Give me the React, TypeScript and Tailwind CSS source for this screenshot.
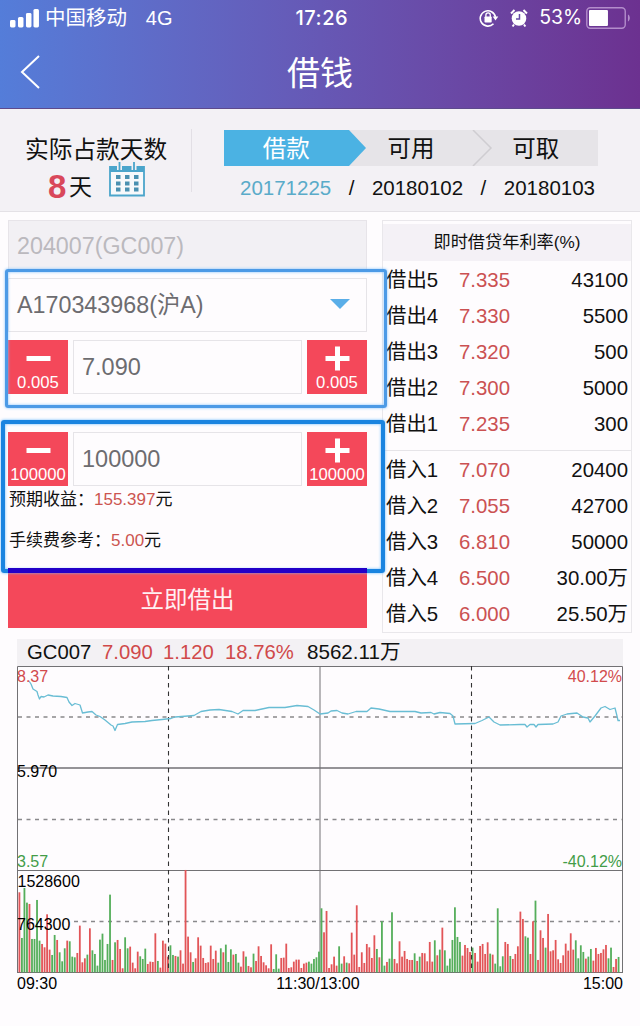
import type { ReactNode } from "react";

type Quote = { label: string; rate: string; amount: string };

const lendQuotes: Quote[] = [
    { label: "借出5", rate: "7.335", amount: "43100" },
    { label: "借出4", rate: "7.330", amount: "5500" },
    { label: "借出3", rate: "7.320", amount: "500" },
    { label: "借出2", rate: "7.300", amount: "5000" },
    { label: "借出1", rate: "7.235", amount: "300" },
];

const borrowQuotes: Quote[] = [
    { label: "借入1", rate: "7.070", amount: "20400" },
    { label: "借入2", rate: "7.055", amount: "42700" },
    { label: "借入3", rate: "6.810", amount: "50000" },
    { label: "借入4", rate: "6.500", amount: "30.00万" },
    { label: "借入5", rate: "6.000", amount: "25.50万" },
];

// One entry per minute: r = up, g = down, followed by the bar height in thirds of a pixel
const volumes = (
    "r240 g103 g253 g209 r205 g100 g100 g217 g95 r85 r75 r174 r68 g52 g112 r97 g60 g33 g72 r95 g93 g47 g45 r58 r140 r30 r42 g53 r132 g66 " +
    "g55 g20 g98 g116 g37 g85 g233 r37 g90 r97 r70 r12 g105 g72 r77 r29 r12 r62 g48 g40 g71 r25 r32 r31 r117 g34 r14 r95 r86 r47 " +
    "g81 g52 r49 g47 r66 r26 r307 r107 r60 g31 r42 r105 r80 r43 r28 r30 r80 r40 r65 g29 g72 r60 g83 g31 g69 r53 g55 g29 r17 r63 " +
    "g47 r19 r15 g56 r34 r78 r49 r30 r21 r12 r84 g10 g54 g11 r43 r44 r86 r13 r15 r32 r38 r38 r13 r26 r29 g32 g26 g40 g45 g62 " +
    "g192 r120 r184 r13 r24 r47 r20 g78 g26 r48 g29 r27 r119 r53 r201 r16 r60 r28 r85 r75 r43 r111 g70 r45 g153 g20 r31 g41 g180 r40 " +
    "r27 r93 r47 r64 r40 r37 r37 g57 r34 g47 r58 r57 r33 r91 r32 g96 r51 g68 r134 g66 g20 g41 g97 g195 g106 g91 r50 r82 r73 r61 " +
    "g74 r58 r32 r79 r85 r55 r90 g56 r53 g26 g192 g18 g48 r91 r85 g49 r40 r55 r78 r182 r160 g108 g104 r55 r153 g215 r37 r126 r103 g74 " +
    "r175 r63 r66 r97 r39 r28 r51 r86 r65 r117 r68 g96 g42 g81 g61 r41 g47 g70 r35 r73 r55 r58 r69 r82 g42 g74 r16 r40 g46"
).split(" ");

const pricePoints =
    "29,681 31,684 33,689 37,691.5 38,695 39.5,699 41,696.5 44,697 48,695 53,696 61,696.5 67,697.5 69,702 72,705.5 75,703.5 80,705 82.5,713 88,712 92,711.5 96,715 100,716.5 105,720 111,725 113,726 115,730.5 117.5,724.5 125,723.5 132,722 145,721.5 152,720.5 162,719.5 171,718.5 175,717 188,716 194,715.5 201,711.5 210,710 219,709.5 232,711.5 238,714 243,710.5 255,710.5 262,709 269,707.5 285,707.5 297,705.5 308,706.5 314,710 320,714 328,713 331,711 337,710.5 342,713 348,714 356,711.5 367,711.5 371,708 379,709 390,711.5 415,711.5 421,713 431,712.5 434,714 440,712.5 450,713.5 453,716 455,724 475,723.5 482,720.5 489,717 494,722 500,725 520,724.5 525,724.5 527,727 530,724.5 534,724.5 536,727 538,724.5 553,724 558,722 561,716 567,714 577,713 583,717 588,718 590,722 595,716 601,708 605,706.5 610,709.5 615,708 617,716 618,720.5 620,720.5";

function StatusBar() {
    return (
        <div className="flex h-9 items-center pl-[10px] pr-[9px]">
            <svg className="mt-px h-[21px] w-[30px]" viewBox="0 0 30 21" fill="white">
                <rect x="0" y="12" width="5.5" height="7.5" rx="1.5" />
                <rect x="8" y="9" width="5.5" height="10.5" rx="1.5" />
                <rect x="16" y="5" width="5.5" height="14.5" rx="1.5" />
                <rect x="23.5" y="1" width="5.5" height="18.500" rx="1.5" />
            </svg>
            <span className="ml-[5px] w-[101px] text-[20.5px]">中国移动</span>
            <span className="w-[149px] text-[20px]">4G</span>
            <span className="w-[185px] pl-px text-[20px] font-medium tracking-[0.5px] font-['Inter']">17:26</span>
            <svg className="h-[20px] w-[20px]" viewBox="0 0 20 20" fill="none" stroke="white" strokeWidth="1.6">
                <path d="M14.500 15.800A7.700 7.700 0 1 1 16.500 9" />
                <path d="M13.700 8.500h5.600L16.500 12.500z" fill="white" stroke="none" />
                <rect x="5.500" y="8.500" width="7.200" height="6" rx=".7" fill="white" stroke="none" />
                <path d="M6.900 9V7a2.200 2.200 0 0 1 4.400 0v2" strokeWidth="1.3" />
            </svg>
            <svg className="ml-[11px] h-[20px] w-[18px]" viewBox="0 0 18 20" fill="none">
                <circle cx="9" cy="10.500" r="7.300" fill="white" />
                <path d="M1 5.500L4.500 2M17 5.500L13.500 2M4 16.500L2.600 18.500M14 16.500l1.400 2" stroke="white" strokeWidth="2" />
                <path d="M9.500 6v5H6" stroke="#664ba5" strokeWidth="1.500" />
            </svg>
            <span className="ml-[11px] w-[47px] text-[19.5px] font-['Inter']">53%</span>
            <svg className="h-[22px] w-[45px]" viewBox="0 0 45 22" fill="none">
                <rect x=".8" y=".8" width="38.500" height="20.400" rx="3.500" stroke="#b38dcb" strokeWidth="1.400" />
                <rect x="3" y="3" width="19" height="16" rx="1" fill="white" />
                <path d="M42 7.500c2.500 1 2.500 6 0 7z" fill="#b38dcb" />
            </svg>
        </div>
    );
}

function Header() {
    return (
        <header className="h-[109px] border-b border-[#5d4a8c] bg-linear-to-r from-[#547dd9] via-[#6658b5] to-[#6c3190] text-white">
            <StatusBar />
            <div className="grid h-[72px] grid-cols-[60px_1fr_60px] items-center">
                <svg className="ml-[20px] h-[34px] w-[20px]" viewBox="0 0 20 34" fill="none" stroke="white" strokeWidth="2">
                    <path d="M19 1L2 17l17 16" />
                </svg>
                <h1 className="pt-[2px] text-center text-[33px] leading-none">借钱</h1>
            </div>
        </header>
    );
}

function CalendarIcon() {
    return (
        <svg className="h-[36px] w-[36px]" viewBox="0 0 36 36" fill="none">
            <path d="M1 6h34v28.500H1z" stroke="#4ba5cb" strokeWidth="1.800" fill="#f7f9fb" />
            <path d="M1 5h34v6H1z" fill="#4ba5cb" />
            <path d="M10.500 0v9M25 0v9" stroke="#f3f1f4" strokeWidth="5" />
            <path d="M10.500 1v8M25 1v8" stroke="#4ba5cb" strokeWidth="1.800" />
            {[14, 20.5, 26.5].map((y) =>
                [7, 16, 25].map((x) => <rect key={`${x}-${y}`} x={x} y={y} width="4.500" height="4" fill="#4a91b1" />)
            )}
        </svg>
    );
}

function LoanPeriod() {
    return (
        <section className="flex h-[103px] border-b border-[#e4e1e6] bg-[#f3f1f5]">
            <div className="h-full w-[191px] pt-[26px] pl-[25px]">
                <p className="text-[23.700px] leading-[30px] whitespace-nowrap">实际占款天数</p>
                <div className="flex h-[40px] items-center pl-[23px]">
                    <span className="mt-[2px] w-[21px] text-[33px] leading-none font-bold text-[#d9485b]">8</span>
                    <span className="mt-[4px] w-[40px] text-[23px]">天</span>
                    <div className="mb-[12px]"><CalendarIcon /></div>
                </div>
            </div>
            <div className="mt-5 h-[63px] w-px bg-[#e2dfe5]" />
            <div className="pt-[21px] pl-8">
                <div className="relative grid h-9 w-[374px] grid-cols-3 bg-[#e6e4e8]">
                    <svg className="absolute inset-0 h-9 w-[374px]" viewBox="0 0 374 36" fill="none">
                        <path d="M0 0h125l17 18-17 18H0z" fill="#4bb2e3" />
                        <path d="M249 0l18 18-18 18" stroke="#cfcdd1" strokeWidth="1.500" />
                    </svg>
                    <span className="relative flex items-center justify-center pt-[4px] text-[23.500px] text-white">借款</span>
                    <span className="relative flex items-center justify-center pt-[4px] text-[23.500px]">可用</span>
                    <span className="relative flex items-center justify-center pt-[4px] text-[23.500px]">可取</span>
                </div>
                <div className="flex w-[371px] justify-between pt-[8px] pl-4 text-[20.500px] leading-[28px]">
                    <span className="text-[#5aabc9]">20171225</span>
                    <span>/</span>
                    <span>20180102</span>
                    <span>/</span>
                    <span>20180103</span>
                </div>
            </div>
        </section>
    );
}

function StepButton({ step, children }: { step: string; children: ReactNode }) {
    return (
        <button className="flex h-[54px] w-[60px] flex-col items-center bg-[#f4485a] text-white">
            <svg className="mt-[6px] h-[25px] w-[25px]" viewBox="0 0 25 25" stroke="white" strokeWidth="5">{children}</svg>
            <span className="mt-[5px] text-[16.700px] leading-[13px]">{step}</span>
        </button>
    );
}

function Stepper({ value, step }: { value: string; step: string }) {
    return (
        <div className="flex h-[54px] justify-between">
            <StepButton step={step}><path d="M.5 12.500h24" /></StepButton>
            <div className="flex w-[229px] items-center border border-[#e6e4e8] pt-[2px] pl-[8px] text-[23.500px] text-[#6d6c70]">{value}</div>
            <StepButton step={step}><path d="M.5 12.500h24M12.500.5v24" /></StepButton>
        </div>
    );
}

function OrderForm() {
    return (
        <div className="relative w-[359px]">
            <div className="flex h-[52px] items-center border border-[#e7e4e9] bg-[#f2f0f4] pt-[2px] pl-2 text-[23.300px] text-[#bbb9be]">204007(GC007)</div>
            <div className="mt-[6px] flex h-[54px] items-center justify-between border border-[#e6e4e8] pt-[2px] pr-[16px] pl-2 text-[23.300px] text-[#6d6c70]">
                <span>A170343968(沪A)</span>
                <svg className="mb-1 h-[10px] w-5" viewBox="0 0 20 10"><path d="M0 0h20L10 10z" fill="#5aaee8" /></svg>
            </div>
            <div className="mt-[8px]"><Stepper value="7.090" step="0.005" /></div>
            <div className="mt-[38px]"><Stepper value="100000" step="100000" /></div>
            <p className="h-[27px] pl-px text-[17px] leading-[28px]">
                预期收益：<span className="text-[#cc5550]">155.397</span>元
            </p>
            <p className="mt-[14px] h-[27px] pl-px text-[17px] leading-[28px]">
                手续费参考：<span className="text-[#cc5550]">5.00</span>元
            </p>
            <button className="mt-[14px] flex h-[60px] w-full items-center justify-center bg-[#f4485a] pt-[5px] text-[23.500px] text-[#fff0f2]">立即借出</button>

            {/* highlighted input groups */}
            <div className="absolute top-[49px] -left-[3px] h-[139px] w-[382px] rounded-[3px] border-[3px] border-[#4c9ae6] shadow-[0_0_3px_#7fc0ff,inset_0_0_3px_#7fc0ff]" />
            <div className="absolute top-[200px] -left-[7px] h-[153px] w-[384px] rounded-[3px] border-4 border-[#1a84e0] shadow-[0_0_3px_#66b9ff,inset_0_0_3px_#66b9ff]" />
            <div className="absolute top-[348px] left-0 h-[5px] w-full bg-[#2300c8]" />
        </div>
    );
}

function QuoteRows({ quotes }: { quotes: Quote[] }) {
    return quotes.map((q) => (
        <div key={q.label} className="flex h-9 items-center pr-[3px] pl-[3px] text-[20.400px]">
            <span className="w-[73px]">{q.label}</span>
            <span className="text-[#cb5152]">{q.rate}</span>
            <span className="ml-auto">{q.amount}</span>
        </div>
    ));
}

function QuoteBoard() {
    return (
        <div className="h-[413px] w-[250px] border border-[#e9e7eb] pt-[3px]">
            <div className="mb-[1px] flex h-[37px] items-center justify-center bg-[#f4f1f6] text-[17.200px]">即时借贷年利率(%)</div>
            <QuoteRows quotes={lendQuotes} />
            <div className="mt-[8px] mb-px h-px bg-[#e6e4e8]" />
            <QuoteRows quotes={borrowQuotes} />
        </div>
    );
}

function Chart() {
    return (
        <svg className="block h-[330px] w-[640px]" viewBox="0 666 640 330" fontSize="16">
            <g stroke="#727174" fill="none">
                <path d="M17.500 972V666.500h605V972" />
                <path d="M17 870.500h606M320 666v306" />
                <path d="M17 768h606" strokeWidth="1.300" />
                <path d="M17 972.500h606" />
            </g>
            <g stroke="#89888b" strokeWidth="1.300" strokeDasharray="4 4.500">
                <path d="M18 717h604M18 819.500h604M74 921.500h546" />
            </g>
            <g>
                {volumes.map((v, i) => {
                    const h = Number(v.slice(1)) / 3;
                    return <rect key={i} x={18.5 + i * 2.5175} y={972.3 - h} width="1.800" height={h} fill={v[0] === "r" ? "#e25558" : "#55ae5b"} />;
                })}
            </g>
            <path d="M168.500 666v306M471.500 666v306" stroke="#333" strokeWidth="1.100" strokeDasharray="4.500 4" />
            <polyline points={pricePoints} fill="none" stroke="#69bdd4" strokeWidth="1.300" strokeLinejoin="round" />
            <text x="17" y="682" fill="#d24b4d">8.37</text>
            <text x="622" y="682" fill="#d24b4d" textAnchor="end">40.12%</text>
            <text x="17" y="776.500">5.970</text>
            <text x="17" y="867" fill="#439c48">3.57</text>
            <text x="622" y="867" fill="#439c48" textAnchor="end">-40.12%</text>
            <text x="17.500" y="887">1528600</text>
            <text x="17" y="930">764300</text>
            <text x="17" y="989">09:30</text>
            <text x="318" y="989" textAnchor="middle">11:30/13:00</text>
            <text x="623" y="989" textAnchor="end">15:00</text>
        </svg>
    );
}

export default function App() {
    return (
        <div className="h-[1026px] w-[640px] overflow-hidden bg-[#fefcfe] font-['Liberation_Sans','Noto_Sans_CJK_SC',sans-serif] leading-none text-[#111]">
            <Header />
            <LoanPeriod />
            <main className="flex gap-[15px] pt-[8px] pl-[8px]">
                <OrderForm />
                <QuoteBoard />
            </main>
            <section className="mt-[6px]">
                <div className="ml-[17px] flex h-[27px] w-[606px] items-center bg-[#f3f1f4] pl-[10px] text-[20.300px]">
                    <span className="w-[75px]">GC007</span>
                    <span className="w-[61px] text-[#d0494a]">7.090</span>
                    <span className="w-[62px] text-[#d0494a]">1.120</span>
                    <span className="w-[82px] text-[#d0494a]">18.76%</span>
                    <span className="text-[20.600px]">8562.11万</span>
                </div>
                <Chart />
            </section>
        </div>
    );
}
